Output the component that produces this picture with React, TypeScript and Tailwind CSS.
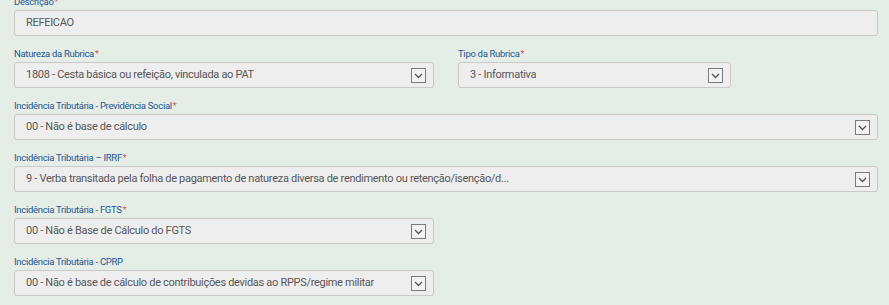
import React from "react";

type FieldProps = {
  label: string;
  required?: boolean;
  value: string;
  select?: boolean;
  className?: string;
};

function Chevron() {
  return (
    <span className="flex h-[15px] w-[15px] shrink-0 items-center justify-center border border-[#7a7a7a] bg-[#f3f3f3]">
      <svg width="11" height="11" viewBox="0 0 11 11" fill="none">
        <path d="M2 4l3.5 3.5L9 4" stroke="#555" strokeWidth="1.3" />
      </svg>
    </span>
  );
}

function Field({ label, required, value, select, className = "" }: FieldProps) {
  return (
    <div className={`flex flex-col ${className}`}>
      <label className="mb-[2px] h-[12px] text-[9.5px] leading-[12px] tracking-[-0.3px] text-[#1d5593]">
        {label}
        {required && <span className="ml-[1px] text-[9px] text-[#d9534f]">*</span>}
      </label>
      <div className="flex h-[26px] items-center justify-between rounded-[3px] border border-[#c9c9c9] bg-[#eeeeee] pl-[11px] pr-[7px]">
        <span className="truncate text-[11px] tracking-[-0.3px] text-[#575757]">{value}</span>
        {select && <Chevron />}
      </div>
    </div>
  );
}

export default function App() {
  return (
    <div
      className="h-[305px] w-full overflow-hidden bg-[#e4eee6]"
      style={{ fontFamily: "Roboto, 'Liberation Sans', sans-serif" }}
    >
      <div className="-mt-[4px] flex w-[864px] flex-col gap-[12px] pl-[14px] box-content">
        <Field label="Descrição" required value="REFEICAO" />
        <div className="flex gap-[24px]">
          <Field
            className="w-[420px]"
            label="Natureza da Rubrica"
            required
            select
            value="1808 - Cesta básica ou refeição, vinculada ao PAT"
          />
          <Field className="w-[273px]" label="Tipo da Rubrica" required select value="3 - Informativa" />
        </div>
        <Field
          label="Incidência Tributária - Previdência Social"
          required
          select
          value="00 - Não é base de cálculo"
        />
        <Field
          label="Incidência Tributária – IRRF"
          required
          select
          value="9 - Verba transitada pela folha de pagamento de natureza diversa de rendimento ou retenção/isenção/d..."
        />
        <Field
          className="w-[420px]"
          label="Incidência Tributária - FGTS"
          required
          select
          value="00 - Não é Base de Cálculo do FGTS"
        />
        <Field
          className="w-[420px]"
          label="Incidência Tributária - CPRP"
          select
          value="00 - Não é base de cálculo de contribuições devidas ao RPPS/regime militar"
        />
      </div>
    </div>
  );
}
